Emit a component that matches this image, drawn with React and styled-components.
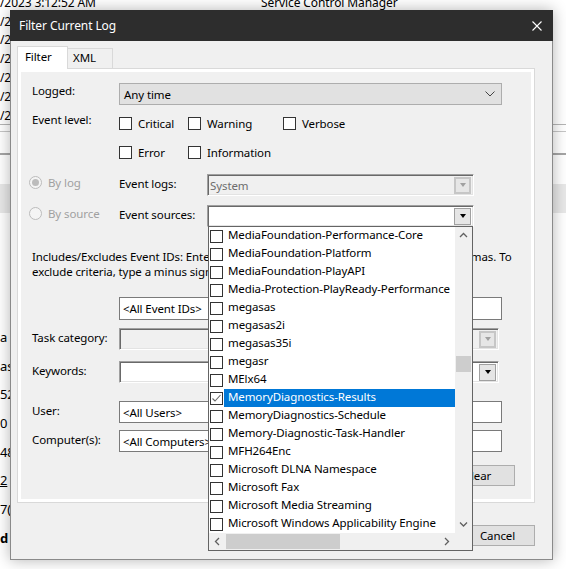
import React from "react";
import styled, { createGlobalStyle } from "styled-components";

const GlobalStyle = createGlobalStyle`
  html, body {
    margin: 0;
    padding: 0;
    background: #ffffff;
  }
  body {
    font-family: "Noto Sans", "Open Sans", sans-serif;
    font-size: 11.5px;
    letter-spacing: -0.1px;
    color: #000000;
  }
  * {
    box-sizing: border-box;
  }
`;

const sources = [
  "MediaFoundation-Performance-Core",
  "MediaFoundation-Platform",
  "MediaFoundation-PlayAPI",
  "Media-Protection-PlayReady-Performance",
  "megasas",
  "megasas2i",
  "megasas35i",
  "megasr",
  "MElx64",
  "MemoryDiagnostics-Results",
  "MemoryDiagnostics-Schedule",
  "Memory-Diagnostic-Task-Handler",
  "MFH264Enc",
  "Microsoft DLNA Namespace",
  "Microsoft Fax",
  "Microsoft Media Streaming",
  "Microsoft Windows Applicability Engine",
];
const SELECTED = 9;

const logRows = [
  "/2023 3:12:52 AM",
  "/2023 3:12:52 AM",
  "/2023 3:12:51 AM",
  "/2023 3:12:51 AM",
  "/2023 3:12:50 AM",
  "/2023 3:12:50 AM",
  "/2023 3:12:49 AM",
];

const details = [
  { t: "a" },
  { t: "as" },
  { t: "52" },
  { t: "0" },
  { t: "48" },
  { t: "2", u: true },
  { t: "7(" },
  { t: "d", b: true },
];

/* ---------- backdrop (event viewer behind the dialog) ---------- */

const Desktop = styled.div`
  position: relative;
  width: 566px;
  height: 569px;
  overflow: hidden;
  background: #ffffff;
`;

const Backdrop = styled.div`
  display: flex;
  flex-direction: column;
  margin-top: -7px;
  font-size: 12px;
`;

const LogRow = styled.div`
  display: flex;
  align-items: center;
  height: 18.8px;
  white-space: nowrap;
`;

const LogCell = styled.span`
  width: ${(p) => p.$w}px;
  flex-shrink: 0;
`;

const Rule = styled.div`
  height: ${(p) => p.$h || 1}px;
  margin-top: ${(p) => p.$mt || 0}px;
  background: ${(p) => p.$c};
`;

const DetailRow = styled.div`
  height: 28.7px;
  display: flex;
  align-items: center;
  margin-top: ${(p) => p.$mt || 0}px;
  font-size: 13px;
  font-weight: ${(p) => (p.$b ? 700 : 400)};
  text-decoration: ${(p) => (p.$u ? "underline" : "none")};
`;

/* ---------- dialog ---------- */

const Dialog = styled.div`
  position: absolute;
  left: 10px;
  top: 10px;
  width: 543px;
  height: 550px;
  display: flex;
  flex-direction: column;
  background: #f0f0f0;
  border: 1px solid #8a8a8a;
  border-top: none;
  box-shadow: 0 0 14px rgba(0, 0, 0, 0.3);
`;

const TitleBar = styled.div`
  height: 31px;
  flex-shrink: 0;
  display: flex;
  align-items: center;
  justify-content: space-between;
  margin: 0 -1px;
  padding: 0 11px 0 9px;
  background: #2d2d2d;
  color: #ffffff;
  font-size: 12px;
`;

const Body = styled.div`
  flex: 1;
  display: flex;
  flex-direction: column;
  padding: 5px 17px 12px 6px;
`;

const Tabs = styled.div`
  display: flex;
  align-items: flex-end;
  height: 22px;
`;

const Tab = styled.div`
  position: relative;
  z-index: ${(p) => (p.$active ? 2 : 1)};
  width: ${(p) => p.$w}px;
  height: ${(p) => (p.$active ? 23 : 20)}px;
  margin-bottom: ${(p) => (p.$active ? -1 : 0)}px;
  margin-left: ${(p) => (p.$active ? 0 : -1)}px;
  padding-left: ${(p) => p.$pad}px;
  padding-top: ${(p) => (p.$active ? 2 : 1)}px;
  background: ${(p) => (p.$active ? "#ffffff" : "#f0f0f0")};
  border: 1px solid #d9d9d9;
  border-bottom: none;
`;

const Panel = styled.div`
  height: 435px;
  padding: 3px;
  background: #ffffff;
  border: 1px solid #d9d9d9;
`;

const PanelInner = styled.div`
  height: 100%;
  display: flex;
  flex-direction: column;
  padding-left: 11px;
  background: #f0f0f0;
`;

const Row = styled.div`
  display: flex;
  align-items: center;
  height: ${(p) => p.$h || 22}px;
  margin-top: ${(p) => p.$mt}px;
`;

const Label = styled.div`
  width: ${(p) => p.$w || 87}px;
  flex-shrink: 0;
  padding-bottom: ${(p) => p.$lift || 4}px;
  white-space: nowrap;
`;

const Select = styled.div`
  width: ${(p) => p.$w}px;
  height: 100%;
  display: flex;
  align-items: center;
  justify-content: space-between;
  padding: 0 6px 0 4px;
  background: #e1e1e1;
  border: 1px solid #adadad;
`;

const TextBox = styled.div`
  width: ${(p) => p.$w}px;
  height: 100%;
  display: flex;
  align-items: center;
  padding-left: 3px;
  background: #ffffff;
  border: 1px solid #7a7a7a;
  white-space: nowrap;
`;

const Combo = styled.div`
  width: ${(p) => p.$w}px;
  height: 100%;
  display: flex;
  align-items: center;
  justify-content: space-between;
  padding: 0 2px 0 2px;
  background: ${(p) => (p.$disabled ? "#f0f0f0" : "#ffffff")};
  color: ${(p) => (p.$disabled ? "#6d6d6d" : "#000000")};
  border: 1px solid;
  border-color: #a0a0a0 #ffffff #ffffff #a0a0a0;
  box-shadow: inset 1px 1px 0 #696969, inset -1px -1px 0 #e3e3e3;
`;

const DropButton = styled.div`
  width: 17px;
  height: 17px;
  display: flex;
  align-items: center;
  justify-content: center;
  background: ${(p) => (p.$disabled ? "#e6e6e6" : "#e5e5e5")};
  border: ${(p) => (p.$disabled ? "2px solid #c6c6c6" : "1px solid #a0a0a0")};
`;

const Triangle = styled.span`
  width: 0;
  height: 0;
  border-left: 3.5px solid transparent;
  border-right: 3.5px solid transparent;
  border-top: 4px solid ${(p) => (p.$disabled ? "#a0a0a0" : "#000000")};
`;

const LevelBlock = styled.div`
  display: flex;
  align-items: flex-start;
  margin-top: 7px;
`;

const LevelLabel = styled.div`
  width: 87px;
  flex-shrink: 0;
  line-height: 16px;
`;

const LevelGrid = styled.div`
  display: grid;
  grid-template-columns: 69px 95px auto;
  grid-auto-rows: 22px;
  row-gap: 7px;
`;

const Check = styled.label`
  display: flex;
  align-items: center;
  gap: 6px;
  white-space: nowrap;
`;

const Box = styled.span`
  width: 13px;
  height: 13px;
  flex-shrink: 0;
  display: flex;
  align-items: center;
  justify-content: center;
  background: #ffffff;
  border: 1px solid #333333;
`;

const RadioCell = styled.div`
  width: 90px;
  margin-left: -3px;
  flex-shrink: 0;
  display: flex;
  align-items: center;
  gap: 6px;
  padding-bottom: 6px;
  color: #a0a0a0;
  white-space: nowrap;
`;

const Radio = styled.span`
  width: 13px;
  height: 13px;
  border-radius: 50%;
  display: flex;
  align-items: center;
  justify-content: center;
  border: 1px solid #bcbcbc;
  background: #f4f4f4;
  &::after {
    content: "";
    width: 7px;
    height: 7px;
    border-radius: 50%;
    background: ${(p) => (p.$on ? "#bcbcbc" : "transparent")};
  }
`;

const Description = styled.div`
  margin-top: 22px;
  line-height: 15px;
  white-space: nowrap;
`;

const ButtonRow = styled.div`
  display: flex;
  justify-content: flex-end;
  gap: ${(p) => p.$gap || 0}px;
  margin-top: ${(p) => p.$mt}px;
  padding-right: ${(p) => p.$pr || 0}px;
`;

const Button = styled.div`
  width: 75px;
  height: 21px;
  display: flex;
  align-items: center;
  justify-content: center;
  background: #e1e1e1;
  border: 1px solid #adadad;
`;

/* ---------- dropped-down source list ---------- */

const DropList = styled.div`
  position: absolute;
  left: 197px;
  top: 216px;
  z-index: 5;
  width: 265px;
  height: 325px;
  display: grid;
  grid-template-columns: 1fr 17px;
  grid-template-rows: 1fr 17px;
  background: #ffffff;
  border: 1px solid #646464;
`;

const Items = styled.div`
  overflow: hidden;
  display: flex;
  flex-direction: column;
`;

const Item = styled.div`
  height: 18px;
  flex-shrink: 0;
  display: flex;
  align-items: center;
`;

const ItemBox = styled(Box)`
  margin: 0 1px 0 1px;
`;

const ItemText = styled.div`
  flex: 1;
  height: 18px;
  line-height: 16px;
  padding-left: 4px;
  white-space: nowrap;
  background: ${(p) => (p.$sel ? "#0078d7" : "transparent")};
  color: ${(p) => (p.$sel ? "#ffffff" : "#000000")};
`;

const VScroll = styled.div`
  display: flex;
  flex-direction: column;
  background: #f0f0f0;
`;

const HScroll = styled.div`
  display: flex;
  background: #f0f0f0;
`;

const ArrowBtn = styled.div`
  width: 17px;
  height: 17px;
  flex-shrink: 0;
  display: flex;
  align-items: center;
  justify-content: center;
`;

const Track = styled.div`
  flex: 1;
  display: flex;
  flex-direction: ${(p) => (p.$vertical ? "column" : "row")};
`;

const Thumb = styled.div`
  background: #cdcdcd;
  ${(p) =>
    p.$vertical
      ? `width: 15px; height: 16px; margin: 112px 0 0 1px;`
      : `width: 114px; height: 15px; margin-top: 1px;`}
`;

const Corner = styled.div`
  background: #f0f0f0;
`;

function Chevron({ dir }) {
  const pts = {
    up: "1,5 4.5,1.5 8,5",
    down: "1,1.5 4.5,5 8,1.5",
    left: "5,1 1.5,4.5 5,8",
    right: "2,1 5.5,4.5 2,8",
  }[dir];
  const vertical = dir === "up" || dir === "down";
  return (
    <svg width={vertical ? 9 : 7} height={vertical ? 7 : 9} viewBox={vertical ? "0 0 9 7" : "0 0 7 9"}>
      <polyline points={pts} fill="none" stroke="#606060" strokeWidth="1.3" />
    </svg>
  );
}

function TickBox({ checked }) {
  return (
    <ItemBox>
      {checked && (
        <svg width="11" height="11" viewBox="0 0 11 11">
          <polyline points="1.5,5.5 4,8 9.5,2" fill="none" stroke="#666666" strokeWidth="1.1" />
        </svg>
      )}
    </ItemBox>
  );
}

function ComboField({ w, disabled, children }) {
  return (
    <Combo $w={w} $disabled={disabled}>
      <span>{children}</span>
      <DropButton $disabled={disabled}>
        <Triangle $disabled={disabled} />
      </DropButton>
    </Combo>
  );
}

export default function App() {
  return (
    <>
      <GlobalStyle />
      <Desktop>
        <Backdrop>
          {logRows.map((d, i) => (
            <LogRow key={i}>
              <LogCell $w={261}>{d}</LogCell>
              <span>Service Control Manager</span>
            </LogRow>
          ))}
          <Rule $c="#b5b5b5" $mt={-1} />
          <Rule $c="#c6c6c6" $mt={6} />
          <Rule $c="#a5a5a5" $h={2} $mt={21} />
          <Rule $c="#e8e8e8" $h={29} $mt={29} />
          {details.map((d, i) => (
            <DetailRow key={i} $mt={i === 0 ? 110 : 0} $b={d.b} $u={d.u}>
              {d.t}
            </DetailRow>
          ))}
        </Backdrop>

        <Dialog>
          <TitleBar>
            <span>Filter Current Log</span>
            <svg width="10" height="10" viewBox="0 0 10 10">
              <path d="M0.5 0.5 L9.5 9.5 M9.5 0.5 L0.5 9.5" stroke="#ffffff" strokeWidth="1.1" />
            </svg>
          </TitleBar>

          <Body>
            <Tabs>
              <Tab $active $w={51} $pad={7}>Filter</Tab>
              <Tab $w={46} $pad={5}>XML</Tab>
            </Tabs>
            <Panel>
              <PanelInner>
                <Row $mt={11}>
                  <Label $lift={8}>Logged:</Label>
                  <Select $w={383}>
                    <span>Any time</span>
                    <svg width="10" height="6" viewBox="0 0 10 6">
                      <polyline points="0.5,0.5 5,5 9.5,0.5" fill="none" stroke="#444444" strokeWidth="1" />
                    </svg>
                  </Select>
                </Row>

                <LevelBlock>
                  <LevelLabel>Event level:</LevelLabel>
                  <LevelGrid>
                    <Check><Box />Critical</Check>
                    <Check><Box />Warning</Check>
                    <Check><Box />Verbose</Check>
                    <Check><Box />Error</Check>
                    <Check><Box />Information</Check>
                  </LevelGrid>
                </LevelBlock>

                <Row $mt={11}>
                  <RadioCell>
                    <Radio $on />
                    By log
                  </RadioCell>
                  <Label $w={88}>Event logs:</Label>
                  <ComboField w={267} disabled>System</ComboField>
                </Row>

                <Row $mt={9}>
                  <RadioCell>
                    <Radio />
                    By source
                  </RadioCell>
                  <Label $w={88}>Event sources:</Label>
                  <ComboField w={267} />
                </Row>

                <Description>
                  Includes/Excludes Event IDs: Enter ID numbers and/or ID ranges separated by commas. To
                  <br />
                  exclude criteria, type a minus sign first. For example 1,3,5-99,-76
                </Description>

                <Row $mt={18} $h={23}>
                  <Label />
                  <TextBox $w={383}>&lt;All Event IDs&gt;</TextBox>
                </Row>

                <Row $mt={8}>
                  <Label>Task category:</Label>
                  <ComboField w={380} disabled />
                </Row>

                <Row $mt={11}>
                  <Label>Keywords:</Label>
                  <ComboField w={380} />
                </Row>

                <Row $mt={18}>
                  <Label>User:</Label>
                  <TextBox $w={383}>&lt;All Users&gt;</TextBox>
                </Row>

                <Row $mt={7}>
                  <Label>Computer(s):</Label>
                  <TextBox $w={383}>&lt;All Computers&gt;</TextBox>
                </Row>

                <ButtonRow $mt={13} $pr={16}>
                  <Button>Clear</Button>
                </ButtonRow>
              </PanelInner>
            </Panel>

            <ButtonRow $mt={22} $gap={5}>
              <Button>OK</Button>
              <Button>Cancel</Button>
            </ButtonRow>
          </Body>

          <DropList>
            <Items>
              {sources.map((s, i) => (
                <Item key={s}>
                  <TickBox checked={i === SELECTED} />
                  <ItemText $sel={i === SELECTED}>{s}</ItemText>
                </Item>
              ))}
            </Items>
            <VScroll>
              <ArrowBtn><Chevron dir="up" /></ArrowBtn>
              <Track $vertical>
                <Thumb $vertical />
              </Track>
              <ArrowBtn><Chevron dir="down" /></ArrowBtn>
            </VScroll>
            <HScroll>
              <ArrowBtn><Chevron dir="left" /></ArrowBtn>
              <Track>
                <Thumb />
              </Track>
              <ArrowBtn><Chevron dir="right" /></ArrowBtn>
            </HScroll>
            <Corner />
          </DropList>
        </Dialog>
      </Desktop>
    </>
  );
}
